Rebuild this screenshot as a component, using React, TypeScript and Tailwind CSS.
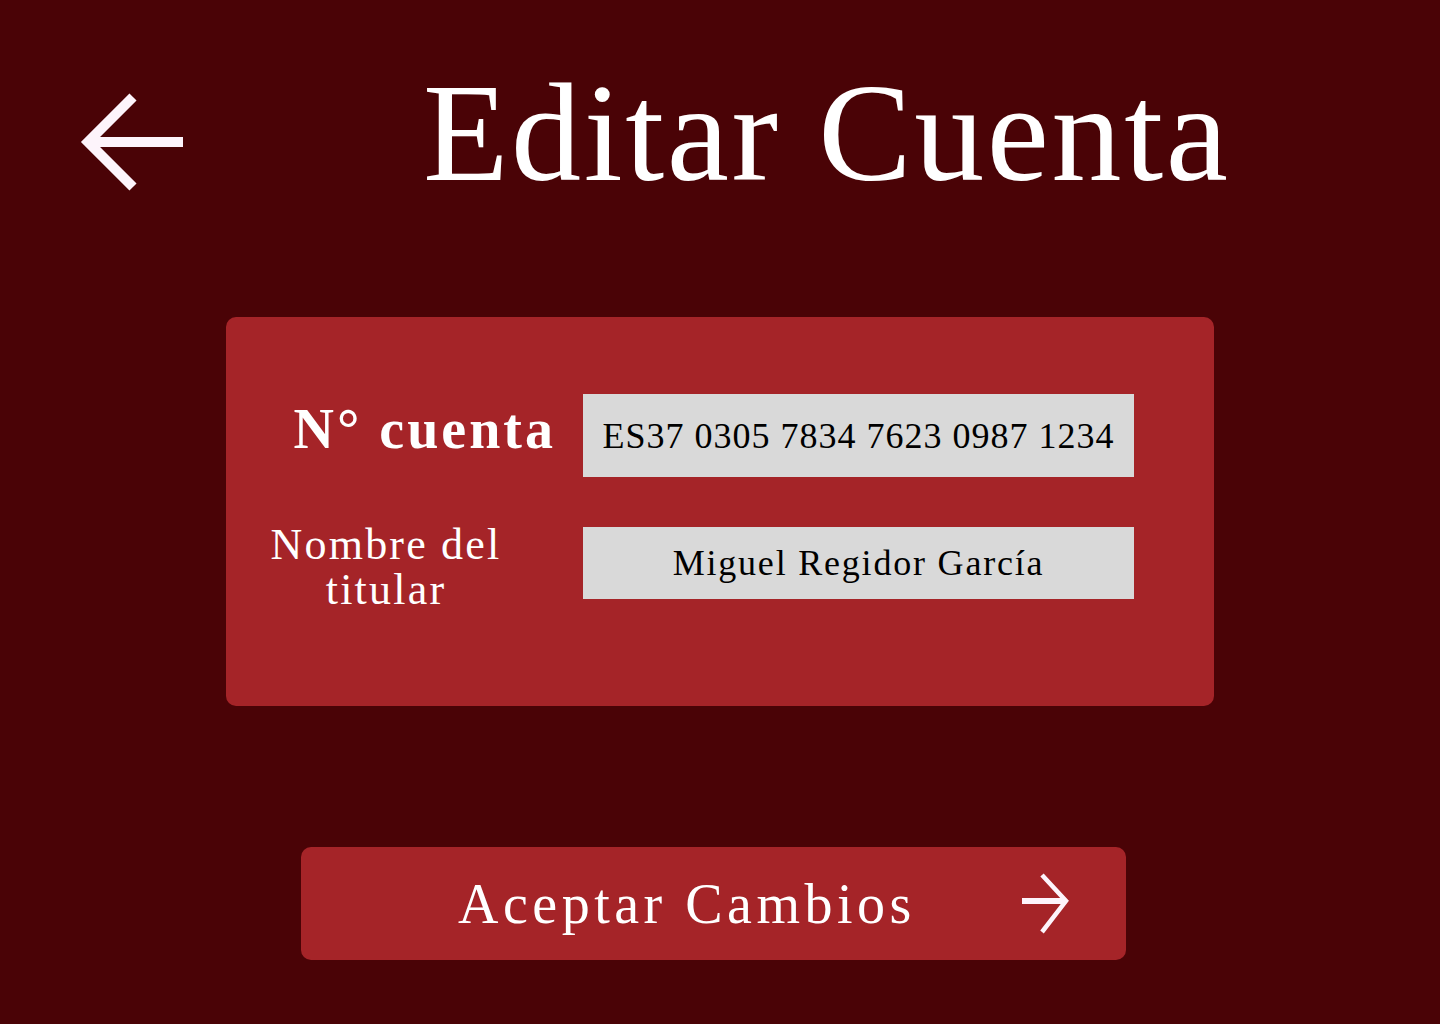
import React from 'react';

const serif = { fontFamily: '"Liberation Serif", "DejaVu Serif", serif' };

function BackArrow() {
  return (
    <svg width="120" height="120" viewBox="0 0 120 120" className="ml-[70px] mt-[85px] shrink-0">
      <polyline points="63,12 18,57 63,102" fill="none" stroke="#fdf4fb" strokeWidth="10" strokeLinejoin="miter" strokeLinecap="butt" />
      <line x1="20" y1="57" x2="113" y2="57" stroke="#fdf4fb" strokeWidth="10" strokeLinecap="butt" />
    </svg>
  );
}

function NextArrow() {
  return (
    <svg width="56" height="68" viewBox="0 0 56 68" className="ml-[101px] shrink-0">
      <polyline points="25,5 49,31 25,62" fill="none" stroke="#fdf4fb" strokeWidth="4.5" strokeLinejoin="miter" />
      <line x1="5" y1="31" x2="47" y2="31" stroke="#fdf4fb" strokeWidth="6" />
    </svg>
  );
}

export default function App() {
  return (
    <div className="min-h-screen w-full bg-[#4a0306] text-white" style={serif}>
      {/* header */}
      <header className="h-[317px] flex items-start">
        <BackArrow />
        <h1 className="ml-[233px] mt-[63px] text-[140px] leading-none tracking-[2.6px] font-normal whitespace-nowrap">
          Editar Cuenta
        </h1>
      </header>

      {/* account card */}
      <section className="ml-[226px] w-[988px] h-[389px] rounded-[10px] bg-[#a52428] pt-[77px] pl-[20px]">
        <div className="flex items-center">
          <div className="w-[310px] text-right text-[56px] font-bold leading-none tracking-[3px] pb-[14px]">
            N° cuenta
          </div>
          <div className="ml-[27px] w-[551px] h-[83px] bg-[#d9d9d9] flex items-center justify-center text-black text-[36px] leading-none tracking-[1px] whitespace-nowrap">
            ES37 0305 7834 7623 0987 1234
          </div>
        </div>

        <div className="flex items-center mt-[36px]">
          <div className="w-[310px] pr-[30px] pt-[9px] text-center text-[44px] leading-[45px] tracking-[2.2px]">
            Nombre del<br />titular
          </div>
          <div className="ml-[27px] w-[551px] h-[72px] bg-[#d9d9d9] flex items-center justify-center text-black text-[36px] leading-none tracking-[1.8px] whitespace-nowrap">
            Miguel Regidor García
          </div>
        </div>
      </section>

      {/* submit */}
      <button className="ml-[301px] mt-[141px] w-[825px] h-[113px] rounded-[10px] bg-[#a52428] flex items-center pl-[157px] text-white">
        <span className="text-[56px] leading-none tracking-[4.5px] whitespace-nowrap">Aceptar Cambios</span>
        <NextArrow />
      </button>
    </div>
  );
}
